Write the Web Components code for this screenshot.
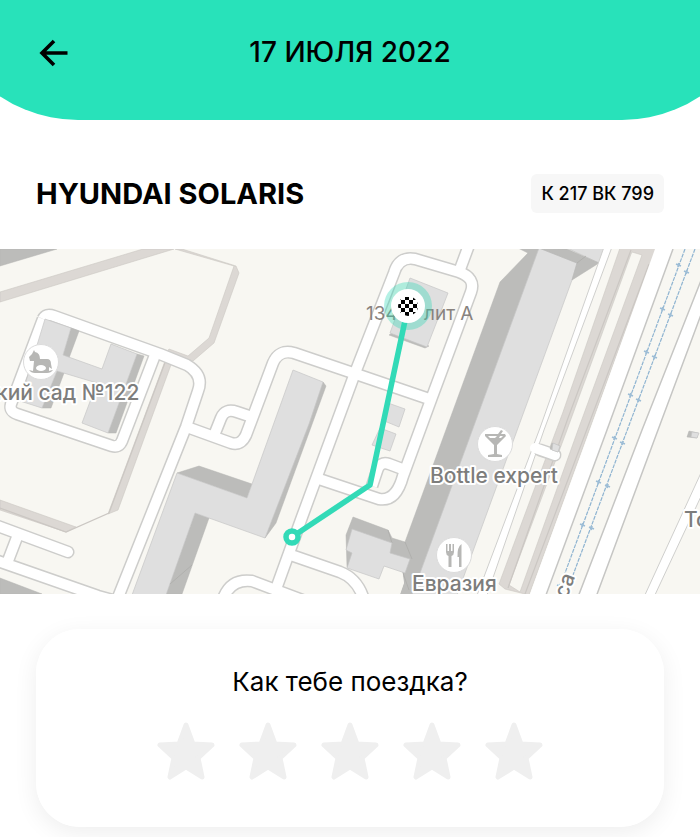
<!DOCTYPE html>
<html lang="ru">
<head>
<meta charset="utf-8">
<meta name="viewport" content="width=device-width, initial-scale=1">
<title>Поездка</title>
<style>
:root {
	--accent: #28e2ba;
	--route: #32dab7;
	--gutter: 36px;
}

body {
	margin: 0;
	background: #fff;
	color: #000;
	font-family: Inter, "Liberation Sans", sans-serif;
}
</style>
</head>
<body>
<trip-page>
	<trip-header slot="header">17 ИЮЛЯ 2022</trip-header>
	<trip-car>
		HYUNDAI SOLARIS
		<span slot="plate">К 217 ВК 799</span>
	</trip-car>
	<trip-map></trip-map>
	<trip-rating>Как тебе поездка?</trip-rating>
</trip-page>

<script>
class TripElement extends HTMLElement {
	constructor() {
		super();
		this.attachShadow({ mode: "open" });
		this.shadowRoot.innerHTML = `<style>${this.constructor.styles}</style>${this.constructor.template}`;
	}
}

class TripPage extends TripElement {
	static styles = /*css*/ `
:host {
	display: block;
}

main {
	display: flex;
	flex-direction: column;
}
`;

	static template = /*html*/ `
<slot name="header"></slot>
<main><slot></slot></main>
`;
}

class TripHeader extends TripElement {
	// The green sheet is wider than the screen, so its round corners are cut by the edges.
	static styles = /*css*/ `
:host {
	display: block;
	overflow: hidden;
}

header {
	margin: -40px -62px 0;
	padding: 74px calc(62px + var(--gutter)) 50px;
	border-radius: 0 0 140px 140px;
	background: var(--accent);
	display: grid;
	grid-template-columns: 1fr auto 1fr;
	align-items: center;
}

h1 {
	margin: 0;
	font-size: 28px;
	font-weight: 500;
	line-height: 36px;
	text-align: center;
}

button {
	appearance: none;
	border: 0;
	padding: 0;
	background: none;
	color: inherit;
	justify-self: start;
	display: flex;
	cursor: pointer;
}

svg {
	width: 36px;
	height: 36px;
}
`;

	static template = /*html*/ `
<header>
	<button type="button" aria-label="Назад">
		<svg aria-hidden="true" viewBox="0 0 36 36" fill="none" stroke="currentColor" stroke-width="3.6">
			<path d="M31.5 19H6M18 7 6 19l12 12" />
		</svg>
	</button>
	<h1><slot></slot></h1>
</header>
`;
}

class TripCar extends TripElement {
	static styles = /*css*/ `
:host {
	display: flex;
	justify-content: space-between;
	align-items: center;
	gap: 16px;
	padding: 54px var(--gutter) 36px;
}

h2 {
	margin: 0;
	font-size: 29px;
	font-weight: 700;
	line-height: 36px;
}

::slotted([slot=plate]) {
	flex: none;
	padding: 8px 10px;
	border-radius: 6px;
	background: #f7f7f7;
	font-size: 18px;
	font-weight: 500;
	line-height: 23px;
}
`;

	static template = /*html*/ `
<h2><slot></slot></h2>
<slot name="plate"></slot>
`;
}

class TripMap extends TripElement {
	static styles = /*css*/ `
:host {
	display: block;
}

svg {
	display: block;
	width: 100%;
	height: auto;
}

.ground { fill: #f8f7f2; }
.road-edge { fill: none; stroke: #cdcdcb; stroke-width: 13; stroke-linejoin: round; }
.road { fill: none; stroke: #fff; stroke-width: 10; stroke-linejoin: round; }
.fence { fill: #dcd8d4; stroke: #cbc7c3; stroke-width: .6; }
.fence-line { fill: none; stroke: #cbc7c3; stroke-width: 1.2; }
.roof { fill: #dfdfdf; stroke: #c6c6c5; stroke-width: .7; }
.wall { fill: #bcbcba; stroke: #b4b4b2; stroke-width: .5; }
.seam { fill: none; stroke: #aaaaa8; stroke-width: .7; }
.highway { fill: #fff; stroke: #c6c6c4; stroke-width: 1.5; }
.lane { fill: #fff; stroke: #cfcfcd; stroke-width: 1; }
.rail { fill: none; stroke: #8fb4d1; stroke-width: 1.2; }
.tie { fill: none; stroke: #9dbdd6; stroke-width: 1.8; }
.pin { fill: #fff; stroke: #dcdcdc; stroke-width: 1; }
.glyph { fill: #b7b7b5; }

.label {
	fill: #7d7d7c;
	font-size: 21px;
	font-weight: 500;
	stroke: #fff;
	stroke-width: 4px;
	stroke-linejoin: round;
	paint-order: stroke;
}

.house {
	fill: #89837e;
	font-size: 19px;
	stroke: none;
	font-weight: 400;
}
`;

	static template = /*html*/ `
<svg viewBox="0 249 700 345" role="img" aria-label="Маршрут поездки">
	<defs>
		<g id="roads">
			<path d="M43 319Q46 313 54 316L160 354 187 365Q204 375 198 391L186 427 117 600" />
			<path d="M43 319 11 404Q9 411 17 414L112 446Q119 448 122 441L155 355" />
			<path d="M-5 525 68 552" stroke-linecap="round" />
			<path d="M-5 560 98 596 116 601M19 532 6 566" />
			<path d="M184 426 231 443Q241 446 246 435L273 363Q279 349 294 353L353 373 432 400" />
			<path d="M213 438 221 418Q225 408 237 412L252 417" />
			<path d="M276 589 302 517 355 373 394 273Q399 256 415 259L459 272Q476 278 471 292L432 397 403 476Q396 502 379 499L316 478" />
			<path d="M459 272 469 245M372 486 377 471Q380 461 389 464L405 470" />
			<path d="M288 554 340 572Q358 579 364 600M222 602Q229 578 252 581L305 601" />
		</g>
		<clipPath id="flag"><circle cx="408" cy="306" r="10" /></clipPath>
	</defs>

	<path class="ground" d="M0 249h700v345H0z" />

	<path class="fence" d="M0 292 143 249h31L0 302z" />
	<path class="fence" d="M175 249h7l54 17 3 7-25 70-21 18-26-9 2-3 19 7 21-18 25-72z" />
	<path class="fence" d="M168 353 172 362 118 510 108 514 142 423zM0 500 76 527 66 532 0 510z" />
	<path class="fence-line" d="M0 508 66 532 109 513 166 360" />

	<use href="#roads" class="road-edge" />
	<use href="#roads" class="road" />

	<path class="wall" d="M0 249h57L0 266zM0 578 42 594H0z" />

	<path class="wall" d="M71 328 79 331 69 358 63 355zM137 354 144 356 116 433 108 433zM57 371 64 373 51 408 42 408z" />
	<path class="roof" d="M45 319 71 328 63 355 102 369 111 344 137 354 108 433 82 423 97 383 57 371 42 408 20 401z" />

	<path class="wall" d="M177 473 199 466 252 484 247 498zM195 513 209 518 182 594H166zM323 382 326 386 276 523 265 538z" />
	<path class="roof" d="M177 473 247 498 293 370 323 382 309 424 265 538 195 513 166 595H132z" />
	<path class="seam" d="M170 584 192 565" />

	<path class="wall" d="M392 333 389 335 425 348 429 346z" />
	<path class="roof" d="M410 278 448 293 427 347 390 333zM388 403 405 409 399 427 382 420zM380 428 396 434 390 451 372 445z" />

	<path class="wall" d="M518 248 528 253 500 282 405 542 392 538 388 530 353 517 346 535 347 567 403 573 404 583 400 595H413L540 248z" />
	<path class="seam" d="M388 530 392 543M405 542 412 559M403 573 409 590" />
	<path class="ground" d="M366 566 384 562 402 570 404 583 400 594H380z" />
	<path class="roof" d="M352 529 392 543 390 553 410 559 405 573 384 566 379 579 347 568 352 553 346 550z" />
	<path class="roof" d="M539 248 577 263 572 280 457 595H412zM567 248h39l-7 15z" />
	<path class="wall" d="M539 248 577 263 572 280 599 263 567 249z" />
	<path class="seam" d="M577 263 586 256" />

	<path class="fence" d="M620 248h37L644 280 529 595 505 589 499 584 563 412zM631 254 567 430 509 585 520 592 578 430 642 255 632 252z" fill-rule="evenodd" />
	<path class="fence-line" d="M631 250 568 418 508 588M649 264 525 594" />
	<path class="lane" d="M604 247 540 428 476 598H486L544 430 612 247z" />
	<path fill="#fff" d="M655 249 590 430 530 594H547L607 430 673 249z" />
	<path class="highway" d="M673 249 607 430 546 595" />
	<path class="highway" d="M714 247 700 283 642 430 578 597H596L658 430 702 312z" />
	<path class="lane" d="M706 462 700 475 644 597H654L704 490z" />

	<path class="road-edge" stroke-linecap="round" d="M540 450 555 455" />
	<path class="road" stroke-linecap="round" d="M535 448 555 455" />
	<path class="wall" d="M550 449 552 443 560 446 558 452zM689 431 698 433 697 438 687 437z" />
	<path class="roof" d="M553 443 560 446 558 452 552 450zM692 432 699 433 697 438 691 437z" />

	<path class="rail" stroke-dasharray="4 1" d="M685 249 565 573M695 249 573 575" />
	<path class="tie" d="m676 264 5 2m-2-3-1 4M660 308l5 2m-2-3-1 4M644 351l5 2m-2-3-1 4M628 394l5 2m-2-3-1 4M612 437l5 2m-2-3-1 4M596 481l5 2m-2-3-1 4M580 524l5 2m-2-3-1 4M684 271l5 2m-2-3-1 4M668 314l5 2m-2-3-1 4M652 356l5 2m-2-3-1 4M636 399l5 2m-2-3-1 4M620 442l5 2m-2-3-1 4M605 485l5 2m-2-3-1 4M589 527l5 2m-2-3-1 4M557 585l5 2m-2-3-1 4" />

	<circle class="pin" cx="41" cy="362" r="17.5" />
	<path class="glyph" d="M34 350 35 352Q40 353 40 359H47Q51 359 51 364L52 369 49 367V371Q52 370 53 370 51 373 47 373H35Q31 373 29 370L33 371 34 361 30 361 29 357 32 354Z" />
	<ellipse cx="41" cy="368" rx="5" ry="3" fill="#fff" />

	<circle class="pin" cx="495" cy="444" r="17.5" />
	<path class="glyph" d="M485 434H498L501 430 503 431 501 434H505L506 436 497 445V454L502 455V457H488V455L494 454V445L485 436ZM488 436 490 438H495L497 436ZM500 436 499 438H501L503 436Z" fill-rule="evenodd" />

	<circle class="pin" cx="454" cy="555" r="17.5" />
	<path class="glyph" d="M446 544H447.500V551H449V544H451V551H452.500V544H454V552Q454 555 451.500 556V567H448.500V556Q446 555 446 552ZM461.500 544V567H459V557H457.500Q457 547 461.500 544Z" />

	<text class="label" x="-4" y="400">кий сад №122</text>
	<text class="label" x="430" y="483">Bottle expert</text>
	<text class="label" x="412" y="591">Евразия</text>
	<text class="label" x="684" y="527">То</text>
	<text class="label" transform="translate(567 599) rotate(-70)">са</text>
	<text class="label house" x="366" y="320">134</text>
	<text class="label house" x="424" y="320">лит А</text>

	<circle cx="408" cy="306" r="24" fill="#28d8b5" opacity=".35" />
	<path d="M406 316 370 485 292 537" fill="none" stroke="var(--route)" stroke-width="5.6" stroke-linejoin="round" />
	<circle cx="292" cy="537" r="6" fill="#fff" stroke="var(--route)" stroke-width="5.5" />
	<circle cx="408" cy="306" r="17" fill="#fff" />
	<g clip-path="url(#flag)">
		<path d="M398 297h3v3h-3zm7 0h4v3h-4zm8 0h4v3h-4zm-12 3h4v4h-4zm8 0h4v4h-4zm8 0h3v4h-3zm-19 4h3v4h-3zm7 0h4v4h-4zm8 0h4v4h-4zm-12 4h4v4h-4zm8 0h4v4h-4zm8 0h3v4h-3zm-19 4h3v4h-3zm7 0h4v4h-4zm8 0h4v4h-4z" />
	</g>
</svg>
`;
}

class TripRating extends TripElement {
	static styles = /*css*/ `
:host {
	display: block;
	padding: 35px var(--gutter) 10px;
}

fieldset {
	min-width: 0;
	margin: 0;
	border: 0;
	border-radius: 44px;
	padding: 37px 24px 47px;
	background: #fff;
	box-shadow: 0 6px 24px rgb(0 0 0 / 7%);
	display: flex;
	flex-direction: column;
	align-items: center;
	gap: 24px;
}

legend {
	float: left;
	padding: 0;
	font-size: 26px;
	line-height: 32px;
	text-align: center;
}

div {
	display: flex;
	gap: 24px;
}

label {
	display: grid;
	color: #efefef;
	cursor: pointer;
}

input, svg {
	grid-area: 1 / 1;
	width: 58px;
	height: 58px;
	margin: 0;
}

input {
	appearance: none;
	border-radius: 8px;
}

svg {
	pointer-events: none;
}

label:has(~ label input:checked), label:has(input:checked) {
	color: var(--accent);
}
`;

	static template = /*html*/ `
<fieldset>
	<legend><slot></slot></legend>
	<div></div>
</fieldset>
`;

	constructor() {
		super();
		this.shadowRoot.querySelector("div").innerHTML = [1, 2, 3, 4, 5]
			.map(
				(value) => /*html*/ `
<label>
	<input type="radio" name="rating" value="${value}" aria-label="Оценка ${value}">
	<svg aria-hidden="true" viewBox="0 0 58 58" fill="currentColor" stroke="currentColor" stroke-width="5" stroke-linejoin="round">
		<path d="M29 3 36 22 55 23 41 36 45 55 29 45 13 55 17 36 3 23 22 22Z" />
	</svg>
</label>`,
			)
			.join("");
	}
}

customElements.define("trip-page", TripPage);
customElements.define("trip-header", TripHeader);
customElements.define("trip-car", TripCar);
customElements.define("trip-map", TripMap);
customElements.define("trip-rating", TripRating);
</script>
</body>
</html>
